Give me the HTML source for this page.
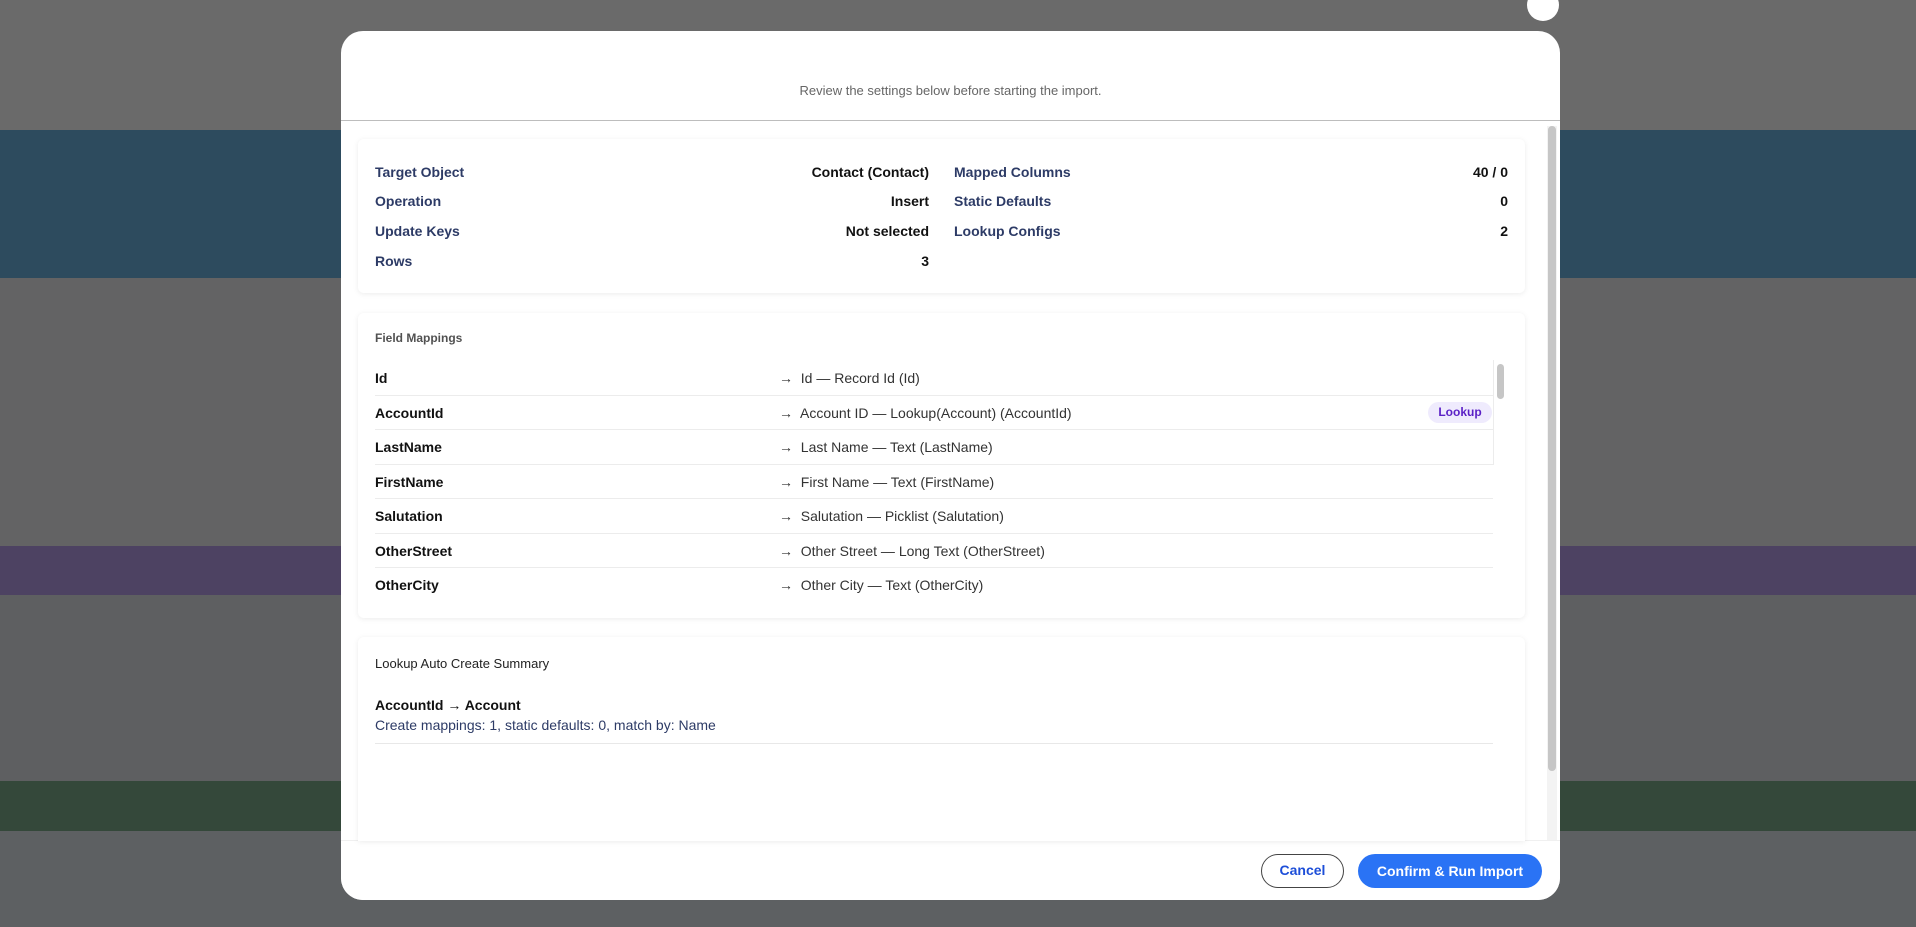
<!DOCTYPE html>
<html><head><meta charset="utf-8"><style>
*{margin:0;padding:0;box-sizing:border-box}
body{width:1916px;height:927px;overflow:hidden;position:relative;background:#5f6062;font-family:"Liberation Sans",Arial,sans-serif}
.bg{position:absolute;left:0;width:1916px}
.a{position:absolute}
.modal{position:absolute;left:341px;top:31px;width:1219px;height:869px;background:#fff;border-radius:22px;overflow:hidden}
.card{position:absolute;background:#fff;border-radius:6px;box-shadow:0 1px 6px rgba(0,0,0,.08)}
.lbl{position:absolute;font-size:14px;font-weight:bold;color:#2d3b66}
.val{position:absolute;font-size:14px;font-weight:bold;color:#111;text-align:right}
.row{position:absolute;left:375px;width:1118px;height:34.5px;border-bottom:1px solid #ececec}
.row b{position:absolute;left:0;top:9px;font-size:14px;color:#111}
.row span{position:absolute;left:404px;top:9px;font-size:14px;color:#333}
</style></head><body>
<div class="bg" style="top:0;height:130px;background:#6a6a6a"></div>
<div class="bg" style="top:130px;height:148px;background:#2d4b5e"></div>
<div class="bg" style="top:278px;height:268px;background:#636364"></div>
<div class="bg" style="top:546px;height:49px;background:#4d4262"></div>
<div class="bg" style="top:595px;height:186px;background:#5e5f61"></div>
<div class="bg" style="top:781px;height:50px;background:#34483a"></div>
<div class="bg" style="top:831px;height:96px;background:#5d6062"></div>
<div class="a" style="left:1527px;top:-11px;width:32px;height:32px;border-radius:50%;background:#fff"></div>

<div class="modal">
  <div class="a" style="left:0;top:0;width:1219px;height:90px;border-bottom:1px solid #bdbdbd"></div>
  <div class="a" style="left:0;top:52px;width:1219px;text-align:center;font-size:13px;color:#666">Review the settings below before starting the import.</div>
  <div class="a" style="left:1206px;top:95px;width:10px;height:745px;background:#f3f3f3"></div>
  <div class="a" style="left:1207px;top:95px;width:8px;height:645px;background:#c6c6c6;border-radius:4px"></div>
  <div class="a" style="left:0;top:809px;width:1219px;height:60px;background:#fff;border-top:1px solid #f0f0f0"></div>
  <div class="a" style="left:920px;top:823px;width:83px;height:34px;border:1.5px solid #444;border-radius:17px;text-align:center;line-height:31px;font-size:14px;font-weight:bold;color:#1d4ed8">Cancel</div>
  <div class="a" style="left:1017px;top:823px;width:184px;height:34px;background:#2a73f5;border-radius:17px;text-align:center;line-height:34px;font-size:14px;font-weight:bold;color:#fff">Confirm &amp; Run Import</div>
</div>

<div class="card" style="left:358px;top:139px;width:1167px;height:154px"></div>
<div class="lbl" style="left:375px;top:164px">Target Object</div>
<div class="lbl" style="left:375px;top:193px">Operation</div>
<div class="lbl" style="left:375px;top:223px">Update Keys</div>
<div class="lbl" style="left:375px;top:253px">Rows</div>
<div class="val" style="left:700px;width:229px;top:164px">Contact (Contact)</div>
<div class="val" style="left:700px;width:229px;top:193px">Insert</div>
<div class="val" style="left:700px;width:229px;top:223px">Not selected</div>
<div class="val" style="left:700px;width:229px;top:253px">3</div>
<div class="lbl" style="left:954px;top:164px">Mapped Columns</div>
<div class="lbl" style="left:954px;top:193px">Static Defaults</div>
<div class="lbl" style="left:954px;top:223px">Lookup Configs</div>
<div class="val" style="left:1400px;width:108px;top:164px">40 / 0</div>
<div class="val" style="left:1400px;width:108px;top:193px">0</div>
<div class="val" style="left:1400px;width:108px;top:223px">2</div>

<div class="card" style="left:358px;top:313px;width:1167px;height:305px"></div>
<div class="a" style="left:375px;top:331px;font-size:12px;color:#333;font-weight:bold;opacity:.85">Field Mappings</div>
<div class="a" style="left:1493px;top:360px;width:1px;height:105px;background:#ececec"></div>
<div class="a" style="left:1497px;top:364px;width:7px;height:35px;background:#c6c6c6;border-radius:4px"></div>
<div class="row" style="top:361px"><b>Id</b><span>→&nbsp; Id — Record Id (Id)</span></div>
<div class="row" style="top:395.5px"><b>AccountId</b><span>→&nbsp; Account ID — Lookup(Account) (AccountId)</span><i class="a" style="left:1053px;top:6px;width:64px;height:21px;background:#efebfd;border-radius:11px;font-style:normal;font-size:12px;font-weight:bold;color:#5b21c6;text-align:center;line-height:21px">Lookup</i></div>
<div class="row" style="top:430px"><b>LastName</b><span>→&nbsp; Last Name — Text (LastName)</span></div>
<div class="row" style="top:464.5px"><b>FirstName</b><span>→&nbsp; First Name — Text (FirstName)</span></div>
<div class="row" style="top:499px"><b>Salutation</b><span>→&nbsp; Salutation — Picklist (Salutation)</span></div>
<div class="row" style="top:533.5px"><b>OtherStreet</b><span>→&nbsp; Other Street — Long Text (OtherStreet)</span></div>
<div class="row" style="top:568px;border:none"><b>OtherCity</b><span>→&nbsp; Other City — Text (OtherCity)</span></div>

<div class="card" style="left:358px;top:637px;width:1167px;height:204px;border-radius:6px 6px 0 0"></div>
<div class="a" style="left:375px;top:656px;font-size:13px;color:#222">Lookup Auto Create Summary</div>
<div class="a" style="left:375px;top:697px;font-size:14px;font-weight:bold;color:#111">AccountId → Account</div>
<div class="a" style="left:375px;top:717px;font-size:14px;color:#2d3b66">Create mappings: 1, static defaults: 0, match by: Name</div>
<div class="a" style="left:375px;top:743px;width:1118px;height:1px;background:#e8e8e8"></div>
</body></html>
